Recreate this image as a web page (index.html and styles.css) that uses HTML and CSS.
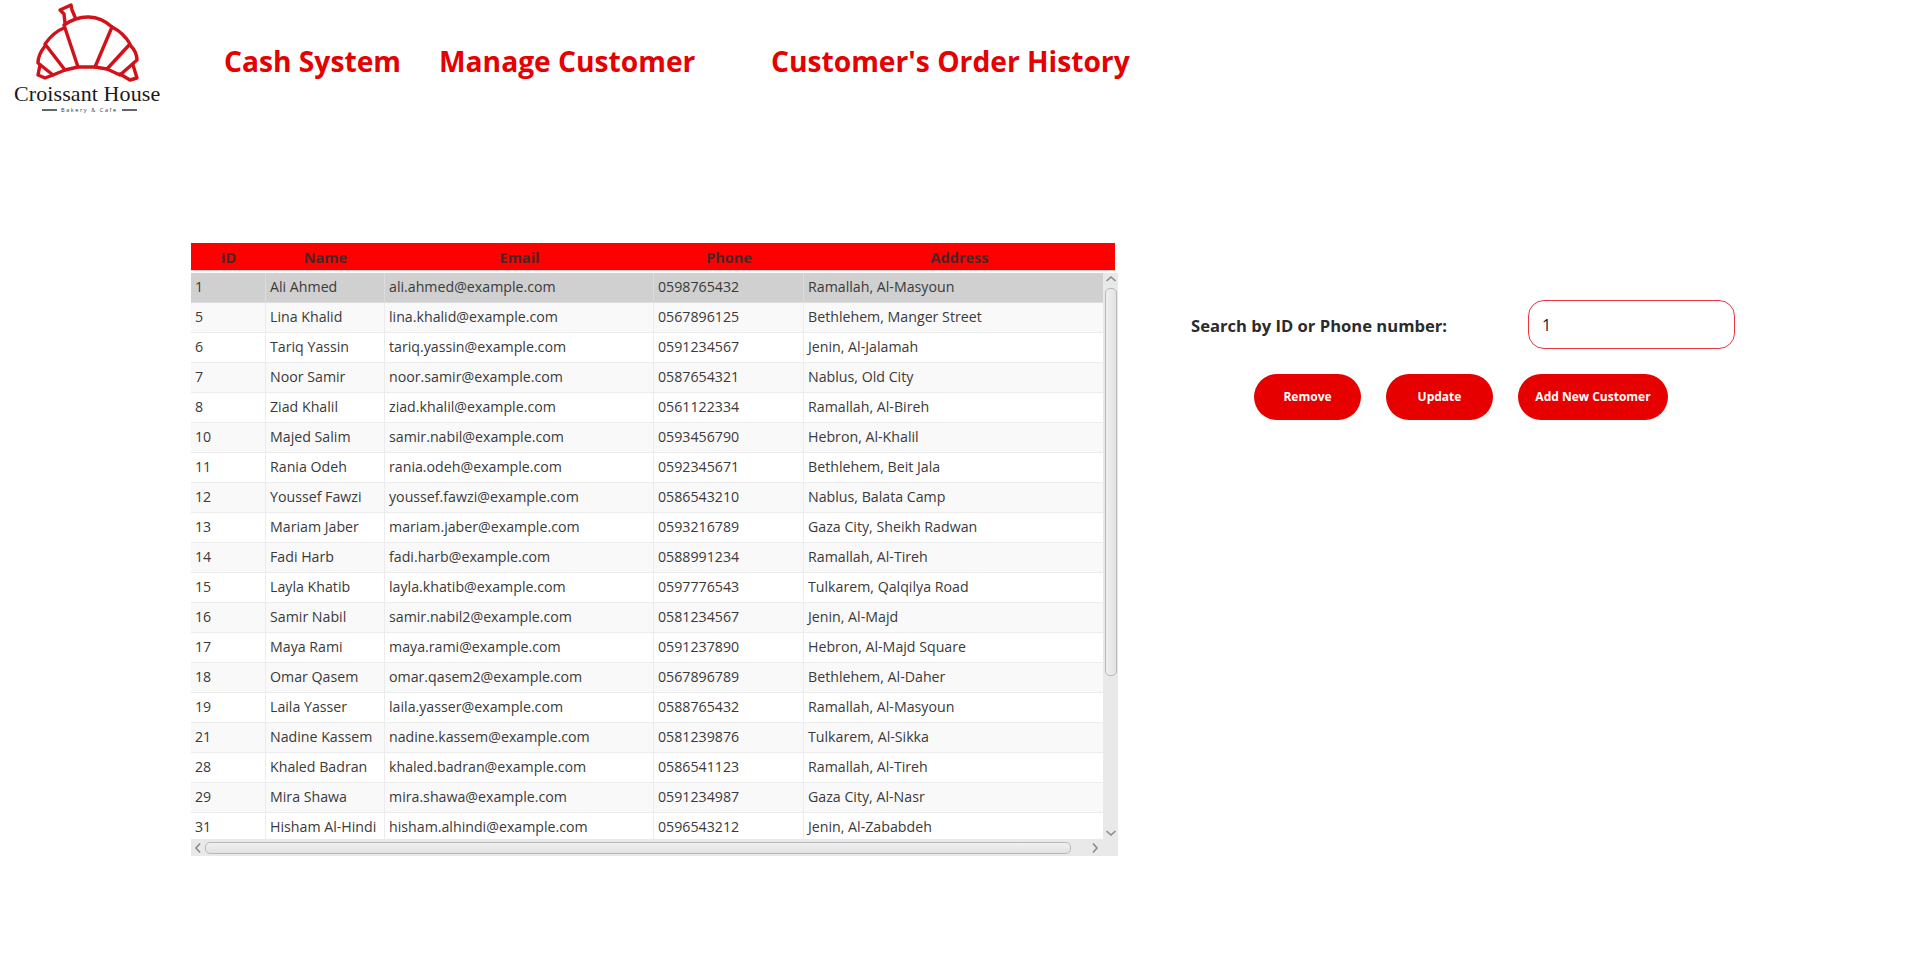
FILE: index.html
```html
<!DOCTYPE html>
<html lang="en">

<head>
    <meta charset="UTF-8">
    <title>Manage Customer</title>
    <link rel="stylesheet" href="styles.css">
</head>

<body>
    <header class="topbar">
        <div class="logo">
            <svg class="logo-mark" width="200" height="83" viewBox="0 0 200 83" fill="none" stroke="#d0121b" stroke-width="3.4" stroke-linejoin="round" stroke-linecap="round">
                <path d="M64 25 C80 14 98 14 112 27 L95 67 L78 67 Z" />
                <path d="M64 28 C56 31 50 37 45 44 L65 70 L78 67" />
                <path d="M45 46 C41 51 38 57 38 63 L53 75 L65 70" />
                <path d="M40 65 L38 75 L45 78 L53 75" />
                <path d="M112 27 C120 31 126 37 130 44 L107 69 L95 67" />
                <path d="M130 45 C135 50 137 56 137 60 L120 75 L107 69" />
                <path d="M133 65 L137 78 L130 80 L120 74" />
                <path d="M65 23 L64 14 L60 10 L71 5 L72 10 L75 17" />
            </svg>
            <div class="logo-name">Croissant House</div>
            <div class="logo-tag"><span class="logo-rule"></span>Bakery &amp; Cafe<span class="logo-rule"></span></div>
        </div>
        <nav class="nav">
            <a class="nav-cash">Cash System</a>
            <a class="nav-manage">Manage Customer</a>
            <a>Customer's Order History</a>
        </nav>
    </header>

    <main class="content">
        <section class="table-view">
            <div class="table-head">
                <div class="col-id">ID</div>
                <div class="col-name">Name</div>
                <div class="col-email">Email</div>
                <div class="col-phone">Phone</div>
                <div class="col-address">Address</div>
            </div>
            <div class="table-middle">
                <div class="table-rows">
                    <div class="row selected"><div class="col-id">1</div><div class="col-name">Ali Ahmed</div><div class="col-email">ali.ahmed@example.com</div><div class="col-phone">0598765432</div><div class="col-address">Ramallah, Al-Masyoun</div></div>
                    <div class="row"><div class="col-id">5</div><div class="col-name">Lina Khalid</div><div class="col-email">lina.khalid@example.com</div><div class="col-phone">0567896125</div><div class="col-address">Bethlehem, Manger Street</div></div>
                    <div class="row"><div class="col-id">6</div><div class="col-name">Tariq Yassin</div><div class="col-email">tariq.yassin@example.com</div><div class="col-phone">0591234567</div><div class="col-address">Jenin, Al-Jalamah</div></div>
                    <div class="row"><div class="col-id">7</div><div class="col-name">Noor Samir</div><div class="col-email">noor.samir@example.com</div><div class="col-phone">0587654321</div><div class="col-address">Nablus, Old City</div></div>
                    <div class="row"><div class="col-id">8</div><div class="col-name">Ziad Khalil</div><div class="col-email">ziad.khalil@example.com</div><div class="col-phone">0561122334</div><div class="col-address">Ramallah, Al-Bireh</div></div>
                    <div class="row"><div class="col-id">10</div><div class="col-name">Majed Salim</div><div class="col-email">samir.nabil@example.com</div><div class="col-phone">0593456790</div><div class="col-address">Hebron, Al-Khalil</div></div>
                    <div class="row"><div class="col-id">11</div><div class="col-name">Rania Odeh</div><div class="col-email">rania.odeh@example.com</div><div class="col-phone">0592345671</div><div class="col-address">Bethlehem, Beit Jala</div></div>
                    <div class="row"><div class="col-id">12</div><div class="col-name">Youssef Fawzi</div><div class="col-email">youssef.fawzi@example.com</div><div class="col-phone">0586543210</div><div class="col-address">Nablus, Balata Camp</div></div>
                    <div class="row"><div class="col-id">13</div><div class="col-name">Mariam Jaber</div><div class="col-email">mariam.jaber@example.com</div><div class="col-phone">0593216789</div><div class="col-address">Gaza City, Sheikh Radwan</div></div>
                    <div class="row"><div class="col-id">14</div><div class="col-name">Fadi Harb</div><div class="col-email">fadi.harb@example.com</div><div class="col-phone">0588991234</div><div class="col-address">Ramallah, Al-Tireh</div></div>
                    <div class="row"><div class="col-id">15</div><div class="col-name">Layla Khatib</div><div class="col-email">layla.khatib@example.com</div><div class="col-phone">0597776543</div><div class="col-address">Tulkarem, Qalqilya Road</div></div>
                    <div class="row"><div class="col-id">16</div><div class="col-name">Samir Nabil</div><div class="col-email">samir.nabil2@example.com</div><div class="col-phone">0581234567</div><div class="col-address">Jenin, Al-Majd</div></div>
                    <div class="row"><div class="col-id">17</div><div class="col-name">Maya Rami</div><div class="col-email">maya.rami@example.com</div><div class="col-phone">0591237890</div><div class="col-address">Hebron, Al-Majd Square</div></div>
                    <div class="row"><div class="col-id">18</div><div class="col-name">Omar Qasem</div><div class="col-email">omar.qasem2@example.com</div><div class="col-phone">0567896789</div><div class="col-address">Bethlehem, Al-Daher</div></div>
                    <div class="row"><div class="col-id">19</div><div class="col-name">Laila Yasser</div><div class="col-email">laila.yasser@example.com</div><div class="col-phone">0588765432</div><div class="col-address">Ramallah, Al-Masyoun</div></div>
                    <div class="row"><div class="col-id">21</div><div class="col-name">Nadine Kassem</div><div class="col-email">nadine.kassem@example.com</div><div class="col-phone">0581239876</div><div class="col-address">Tulkarem, Al-Sikka</div></div>
                    <div class="row"><div class="col-id">28</div><div class="col-name">Khaled Badran</div><div class="col-email">khaled.badran@example.com</div><div class="col-phone">0586541123</div><div class="col-address">Ramallah, Al-Tireh</div></div>
                    <div class="row"><div class="col-id">29</div><div class="col-name">Mira Shawa</div><div class="col-email">mira.shawa@example.com</div><div class="col-phone">0591234987</div><div class="col-address">Gaza City, Al-Nasr</div></div>
                    <div class="row"><div class="col-id">31</div><div class="col-name">Hisham Al-Hindi</div><div class="col-email">hisham.alhindi@example.com</div><div class="col-phone">0596543212</div><div class="col-address">Jenin, Al-Zababdeh</div></div>
                </div>
                <div class="vbar">
                    <svg class="arrow" width="12" height="8" viewBox="0 0 12 8"><path d="M1.5 6 L6 2 L10.5 6" /></svg>
                    <div class="vbar-track"><div class="vbar-thumb"></div></div>
                    <svg class="arrow" width="12" height="8" viewBox="0 0 12 8"><path d="M1.5 2 L6 6 L10.5 2" /></svg>
                </div>
            </div>
            <div class="hbar">
                <svg class="arrow" width="8" height="12" viewBox="0 0 8 12"><path d="M6 1.5 L2 6 L6 10.5" /></svg>
                <div class="hbar-track"><div class="hbar-thumb"></div></div>
                <svg class="arrow" width="8" height="12" viewBox="0 0 8 12"><path d="M2 1.5 L6 6 L2 10.5" /></svg>
            </div>
        </section>

        <section class="side">
            <div class="search">
                <label class="search-label" for="search">Search by ID or Phone number:</label>
                <input class="search-input" id="search" type="text" value="1">
            </div>
            <div class="actions">
                <button class="btn">Remove</button>
                <button class="btn">Update</button>
                <button class="btn btn-wide">Add New Customer</button>
            </div>
        </section>
    </main>
</body>

</html>
```

FILE: styles.css
```css
body {
    margin: 0;
    background-color: #fff;
    font-family: 'Open Sans', 'Noto Sans', sans-serif;
    color: #333;
}

.topbar {
    display: flex;
    height: 243px;
}

.logo {
    width: 200px;
    height: 130px;
    flex-shrink: 0;
}

.logo-mark {
    display: block;
}

.logo-name {
    font-family: 'Liberation Serif', serif;
    font-size: 22px;
    line-height: 22px;
    letter-spacing: 0.1px;
    color: #1a1a1a;
    margin-left: 14px;
    white-space: nowrap;
}

.logo-tag {
    display: flex;
    align-items: center;
    gap: 4px;
    margin-left: 42px;
    font-size: 5.5px;
    letter-spacing: 1.6px;
    line-height: 10px;
    color: #333;
    white-space: nowrap;
}

.logo-rule {
    width: 15px;
    height: 2px;
    background-color: #666;
}

.nav {
    display: flex;
    padding-top: 41px;
    padding-left: 24px;
    font-size: 28.2px;
    font-weight: 700;
    line-height: 40px;
    color: #e60000;
    height: 40px;
    white-space: nowrap;
}

.nav-cash {
    width: 215px;
}

.nav-manage {
    width: 332px;
}

.content {
    display: flex;
    padding-left: 191px;
}

.table-view {
    width: 927px;
    flex-shrink: 0;
    font-size: 14.2px;
}

.table-head {
    display: flex;
    width: 924px;
    height: 27px;
    margin-bottom: 3px;
    background-color: #ff0000;
    box-shadow: 0 1px 0 #ffc9c9;
    font-size: 14.5px;
    font-weight: 700;
    line-height: 29px;
    color: #4a2626;
    text-align: center;
    overflow: hidden;
}

.col-id {
    width: 75px;
}

.col-name {
    width: 119px;
}

.col-email {
    width: 269px;
}

.col-phone {
    width: 150px;
}

.col-address {
    width: 311px;
}

.table-middle {
    display: flex;
    height: 566px;
}

.table-rows {
    width: 912px;
    overflow: hidden;
}

.row {
    display: flex;
    height: 29px;
    line-height: 27px;
    border-bottom: 1px solid #ececec;
    background-color: #fff;
    color: #3a3a3a;
    white-space: nowrap;
}

.row:nth-child(even) {
    background-color: #f9f9f9;
}

.row.selected {
    background-color: #d0d0d0;
    border-bottom-color: #dcdcdc;
}

.row > div {
    box-sizing: border-box;
    height: 100%;
    padding-left: 4px;
    border-right: 1px solid #ececec;
    overflow: hidden;
}

.row .col-address {
    width: 299px;
    border-right: none;
}

.row.selected > div {
    border-right-color: #dcdcdc;
}

.vbar {
    display: flex;
    flex-direction: column;
    align-items: center;
    width: 15px;
    background-color: #e9e9e9;
}

.vbar-track {
    flex: 1;
    width: 100%;
    padding-top: 3px;
}

.vbar-thumb {
    box-sizing: border-box;
    width: 12px;
    height: 388px;
    margin: 0 auto;
    border: 1px solid #b8b8b8;
    border-radius: 5px;
    background: linear-gradient(to right, #f0f0f0, #e2e2e2);
}

.hbar {
    display: flex;
    align-items: center;
    height: 17px;
    padding: 0 19px 0 3px;
    background-color: #e9e9e9;
}

.hbar-track {
    flex: 1;
    padding: 0 3px;
}

.hbar-thumb {
    box-sizing: border-box;
    width: 866px;
    height: 12px;
    border: 1px solid #b8b8b8;
    border-radius: 5px;
    background: linear-gradient(#f0f0f0, #e2e2e2);
}

.arrow {
    flex-shrink: 0;
    fill: none;
    stroke: #8a8a8a;
    stroke-width: 1.6;
}

.vbar .arrow {
    margin: 2px 0;
}

.side {
    margin-left: 73px;
    padding-top: 57px;
}

.search {
    display: flex;
    align-items: center;
}

.search-label {
    width: 337px;
    padding-top: 1px;
    font-size: 16.6px;
    font-weight: 700;
    color: #2b2b2b;
}

.search-input {
    box-sizing: border-box;
    width: 207px;
    height: 49px;
    padding: 0 13px;
    border: 1.5px solid #e8343c;
    border-radius: 16px;
    font-family: 'Open Sans', sans-serif;
    font-size: 16px;
    color: #1a1a2e;
    outline: none;
}

.actions {
    display: flex;
    gap: 25px;
    margin-top: 25px;
    padding-left: 63px;
}

.btn {
    width: 107px;
    height: 46px;
    padding: 0 0 2px;
    border: none;
    border-radius: 23px;
    background-color: #e60000;
    color: #fff;
    font-family: 'Open Sans', sans-serif;
    font-size: 12px;
    font-weight: 700;
    cursor: pointer;
}

.btn-wide {
    width: 150px;
}
```
